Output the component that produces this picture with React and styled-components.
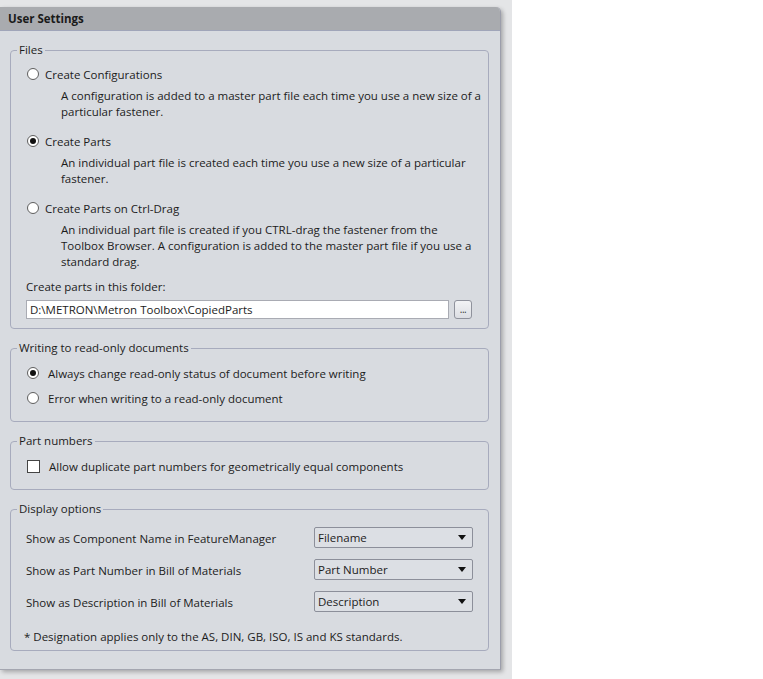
import React from "react";
import styled, { createGlobalStyle } from "styled-components";

const Global = createGlobalStyle`
  html, body { margin: 0; padding: 0; background: #ffffff; }
  body { font-family: "Open Sans", "Noto Sans", Arial, sans-serif; font-size: 11.5px; color: #1c1c1c; }
  * { box-sizing: border-box; }
`;

const Backdrop = styled.div`
  width: 512px;
  height: 679px;
  background: #e4e5e7;
  padding-top: 7px;
`;

const Panel = styled.div`
  width: 501px;
  background: #d8dbe0;
  border-right: 1px solid #9c9eab;
  border-bottom: 1px solid #a4a6b0;
  border-top-right-radius: 5px;
  box-shadow: 2px 2px 4px rgba(0, 0, 0, 0.28);
  overflow: hidden;
`;

const TitleBar = styled.div`
  height: 24px;
  background: #a9abaf;
  border-bottom: 1px solid #a0a5b9;
  padding-left: 8px;
  font-weight: 700;
  font-size: 11.5px;
  line-height: 24px;
  color: #1a1a1a;
`;

const Body = styled.div`
  display: flex;
  flex-direction: column;
  gap: 11px;
  padding: 11px 11px 18px 10px;
`;

const Group = styled.fieldset`
  margin: 0;
  padding: 0;
  border: 1px solid #a7abbd;
  border-radius: 4px;
  min-width: 0;
`;

const Legend = styled.legend`
  margin-left: 6px;
  padding: 0 2px;
  font-size: 11.5px;
  line-height: 16px;
  color: #1c1c1c;
`;

const Inner = styled.div`
  display: flex;
  flex-direction: column;
  gap: ${(p) => p.$gap || 0}px;
  padding: ${(p) => p.$pad};
`;

const OptionRow = styled.label`
  display: flex;
  align-items: center;
  height: 20px;
  gap: ${(p) => p.$gap || 6}px;
  padding-left: 1px;
  white-space: nowrap;
`;

const RadioDot = styled.span`
  width: 12px;
  height: 12px;
  border-radius: 50%;
  border: 1px solid #5e5e5e;
  background: #ffffff;
  display: inline-flex;
  align-items: center;
  justify-content: center;
  flex: none;
  &::after {
    content: "";
    width: 6px;
    height: 6px;
    border-radius: 50%;
    background: ${(p) => (p.$on ? "#111" : "transparent")};
  }
`;

const CheckBox = styled.span`
  width: 13px;
  height: 13px;
  border: 1px solid #444;
  background: #ffffff;
  flex: none;
`;

const Desc = styled.div`
  margin-top: 4px;
  margin-bottom: ${(p) => p.$mb || 0}px;
  padding-left: 35px;
  line-height: 16px;
  white-space: nowrap;
`;

const FolderLabel = styled.div`
  line-height: 16px;
  margin-top: 9px;
`;

const FolderRow = styled.div`
  display: flex;
  align-items: center;
  gap: 5px;
  margin-top: 5px;
`;

const PathInput = styled.div`
  width: 423px;
  height: 19px;
  background: #ffffff;
  border: 1px solid #a9abb3;
  padding-left: 3px;
  line-height: 17px;
  white-space: nowrap;
`;

const BrowseButton = styled.div`
  width: 18px;
  height: 19px;
  border: 1px solid #8f929c;
  border-radius: 3px;
  background: linear-gradient(#f2f3f5, #dcdee3);
  font-size: 10px;
  line-height: 17px;
  text-align: center;
  letter-spacing: -0.5px;
  color: #333;
`;

const OptionGrid = styled.div`
  display: grid;
  grid-template-columns: 288px 159px;
  row-gap: 11px;
  align-items: center;
`;

const RowLabel = styled.div`
  line-height: 18px;
  padding-top: 3px;
`;

const Select = styled.div`
  height: 21px;
  border: 1px solid #8c8f9a;
  border-radius: 2px;
  background: #dcdfe4;
  display: flex;
  align-items: center;
  justify-content: space-between;
  padding: 0 4px 0 3px;
  line-height: 19px;
`;

const Caret = styled.span`
  width: 0;
  height: 0;
  border-left: 4px solid transparent;
  border-right: 4px solid transparent;
  border-top: 5px solid #111;
  margin-right: 2px;
`;

const Note = styled.div`
  margin-top: 17px;
  margin-left: -2px;
  line-height: 16px;
`;

function Radio({ on, label, gap }) {
  return (
    <OptionRow $gap={gap}>
      <RadioDot $on={on} />
      <span>{label}</span>
    </OptionRow>
  );
}

export default function App() {
  return (
    <>
      <Global />
      <Backdrop>
        <Panel>
          <TitleBar>User Settings</TitleBar>
          <Body>
            <Group>
              <Legend>Files</Legend>
              <Inner $pad="6px 16px 9px 15px">
                <Radio label="Create Configurations" />
                <Desc $mb={11}>
                  A configuration is added to a master part file each time you use a new size of a
                  <br />
                  particular fastener.
                </Desc>
                <Radio on label="Create Parts" />
                <Desc $mb={11}>
                  An individual part file is created each time you use a new size of a particular
                  <br />
                  fastener.
                </Desc>
                <Radio label="Create Parts on Ctrl-Drag" />
                <Desc>
                  An individual part file is created if you CTRL-drag the fastener from the
                  <br />
                  Toolbox Browser. A configuration is added to the master part file if you use a
                  <br />
                  standard drag.
                </Desc>
                <FolderLabel>Create parts in this folder:</FolderLabel>
                <FolderRow>
                  <PathInput>D:\METRON\Metron Toolbox\CopiedParts</PathInput>
                  <BrowseButton>...</BrowseButton>
                </FolderRow>
              </Inner>
            </Group>

            <Group>
              <Legend>Writing to read-only documents</Legend>
              <Inner $gap={5} $pad="7px 16px 13px 15px">
                <Radio on gap={9} label="Always change read-only status of document before writing" />
                <Radio gap={9} label="Error when writing to a read-only document" />
              </Inner>
            </Group>

            <Group>
              <Legend>Part numbers</Legend>
              <Inner $pad="7px 16px 13px 15px">
                <OptionRow $gap={9}>
                  <CheckBox />
                  <span>Allow duplicate part numbers for geometrically equal components</span>
                </OptionRow>
              </Inner>
            </Group>

            <Group>
              <Legend>Display options</Legend>
              <Inner $pad="10px 16px 5px 15px">
                <OptionGrid>
                  <RowLabel>Show as Component Name in FeatureManager</RowLabel>
                  <Select>
                    <span>Filename</span>
                    <Caret />
                  </Select>
                  <RowLabel>Show as Part Number in Bill of Materials</RowLabel>
                  <Select>
                    <span>Part Number</span>
                    <Caret />
                  </Select>
                  <RowLabel>Show as Description in Bill of Materials</RowLabel>
                  <Select>
                    <span>Description</span>
                    <Caret />
                  </Select>
                </OptionGrid>
                <Note>* Designation applies only to the AS, DIN, GB, ISO, IS and KS standards.</Note>
              </Inner>
            </Group>
          </Body>
        </Panel>
      </Backdrop>
    </>
  );
}
